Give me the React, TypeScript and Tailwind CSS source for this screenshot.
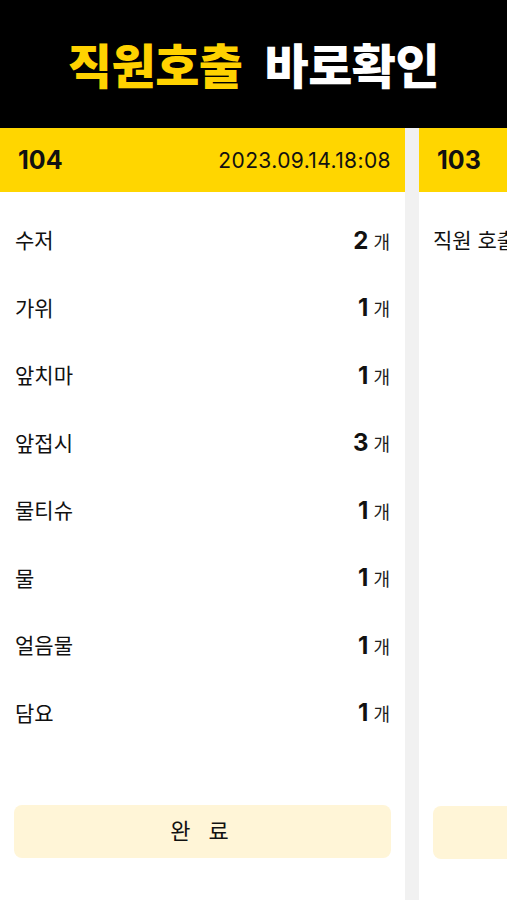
import React from 'react';

const KR = "font-['Inter','Noto_Sans_CJK_KR',sans-serif]";

const ITEMS: { name: string; qty: number }[] = [
  { name: '수저', qty: 2 },
  { name: '가위', qty: 1 },
  { name: '앞치마', qty: 1 },
  { name: '앞접시', qty: 3 },
  { name: '물티슈', qty: 1 },
  { name: '물', qty: 1 },
  { name: '얼음물', qty: 1 },
  { name: '담요', qty: 1 },
];

function CallCard({ table, time, children }: { table: string; time?: string; children: React.ReactNode }) {
  return (
    <div className="w-[405px] shrink-0 bg-white flex flex-col">
      <div className="h-[64px] bg-[#ffd600] flex items-center justify-between pl-[18px] pr-[14px]">
        <span className="text-[25px] font-bold text-[#111] leading-none">{table}</span>
        {time && <span className="text-[21px] text-[#111] leading-none tracking-[0.4px]">{time}</span>}
      </div>
      {children}
    </div>
  );
}

export default function App() {
  return (
    <div className={`w-[507px] h-[900px] overflow-hidden flex flex-col bg-[#f1f1f1] ${KR}`}>
      <header className="h-[128px] shrink-0 bg-black flex items-center justify-center gap-[22px] pt-[6px]">
        <span className="text-[48px] font-extrabold text-[#ffd200] tracking-[-0.5px] leading-none">직원호출</span>
        <span className="text-[48px] font-extrabold text-white tracking-[-0.5px] leading-none">바로확인</span>
      </header>

      <div className="flex-1 flex gap-[14px] overflow-hidden">
        <CallCard table="104" time="2023.09.14.18:08">
          <div className="pt-[15px] px-[15px]">
            {ITEMS.map((it) => (
              <div key={it.name} className="h-[67.5px] flex items-center justify-between">
                <span className="text-[21px] text-[#111]">{it.name}</span>
                <span className="flex items-baseline gap-[5px]">
                  <span className="text-[24px] font-bold text-[#111]">{it.qty}</span>
                  <span className="text-[18px] text-[#222]">개</span>
                </span>
              </div>
            ))}
          </div>
          <div className="px-[14px] mt-[58px]">
            <button className="w-full h-[53px] rounded-[8px] bg-[#fff5d7] text-[22px] text-[#111] tracking-[6px] flex items-center justify-center">
              완 료
            </button>
          </div>
        </CallCard>

        <CallCard table="103">
          <div className="pt-[15px] px-[14px]">
            <div className="h-[67.5px] flex items-center">
              <span className="text-[21px] text-[#111] whitespace-nowrap">직원 호출</span>
            </div>
          </div>
          <div className="px-[14px] mt-[531px]">
            <div className="w-full h-[53px] rounded-[8px] bg-[#fff5d7]" />
          </div>
        </CallCard>
      </div>
    </div>
  );
}
